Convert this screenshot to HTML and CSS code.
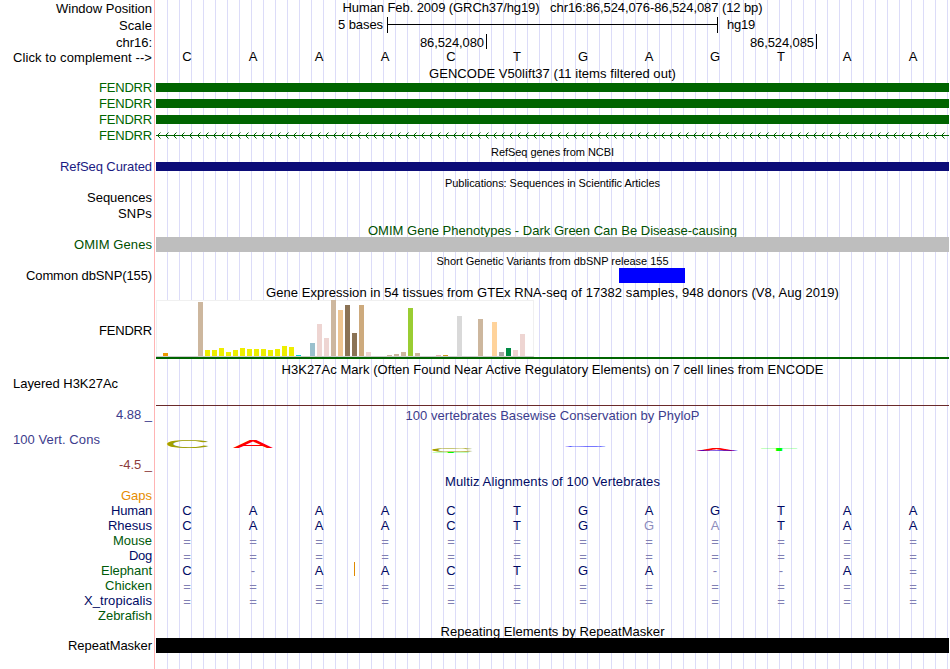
FILE: index.html
```html
<!DOCTYPE html>
<html lang="en">
<head>
<meta charset="utf-8">
<title>Genome Browser - chr16:86,524,076-86,524,087</title>
<link rel="stylesheet" href="styles.css">
</head>
<body>
<main class="browser">
  <div class="row h17 drop1"><div class="label"><span data-w="96">Window Position</span></div><div class="title"><span data-w="420">Human Feb. 2009 (GRCh37/hg19) &nbsp; chr16:86,524,076-86,524,087 (12 bp)</span></div></div>
  <div class="row h17 drop1"><div class="label"><span data-w="33">Scale</span></div>
    <div class="scale"><div class="scale-text"><span data-w="45">5 bases</span></div><div class="ruler"></div><div class="scale-unit"><span data-w="28">hg19</span></div></div></div>
  <div class="row h16 drop1"><div class="label"><span data-w="36">chr16:</span></div>
    <div class="ticks"><div class="tick"><span data-w="64">86,524,080</span></div><div class="tick"><span data-w="64">86,524,085</span></div></div></div>
  <div class="row h15"><div class="label"><span data-w="139">Click to complement --&gt;</span></div><div class="bases lift" data-seq="CAAACTGAGTAA"></div></div>
  <div class="row h15 drop1"><div class="label"></div><div class="title gencode"><span data-w="247">GENCODE V50lift37 (11 items filtered out)</span></div></div>
  <div class="row h16"><div class="label green"><span data-w="53">FENDRR</span></div><div class="exon"></div></div>
  <div class="row h16"><div class="label green"><span data-w="53">FENDRR</span></div><div class="exon"></div></div>
  <div class="row h16"><div class="label green"><span data-w="53">FENDRR</span></div><div class="exon"></div></div>
  <div class="row h16"><div class="label green"><span data-w="53">FENDRR</span></div>
    <svg class="intron" width="793" height="16" shape-rendering="crispEdges"><defs><pattern id="arrow" width="8" height="16" patternUnits="userSpaceOnUse"><path d="M0 7h8v1h-8zM1 7h1v1h-1zM2 6h1v1h-1zM2 8h1v1h-1zM3 5h1v1h-1zM3 9h1v1h-1z"/><path class="soft" d="M4 4h1v1h-1zM4 10h1v1h-1z"/></pattern></defs><rect width="793" height="16" fill="url(#arrow)"/></svg></div>
  <div class="row h15"><div class="label"></div><div class="title small"><span data-w="123">RefSeq genes from NCBI</span></div></div>
  <div class="row h16"><div class="label navy"><span data-w="92">RefSeq Curated</span></div><div class="exon refseq"></div></div>
  <div class="row h15"><div class="label"></div><div class="title small"><span data-w="215">Publications: Sequences in Scientific Articles</span></div></div>
  <div class="row h16"><div class="label"><span data-w="65">Sequences</span></div></div>
  <div class="row h16"><div class="label"><span data-w="34">SNPs</span></div></div>
  <div class="row h15"><div class="label"></div><div class="title omim"><span data-w="369">OMIM Gene Phenotypes - Dark Green Can Be Disease-causing</span></div></div>
  <div class="row h15"><div class="label omim-label"><span data-w="78">OMIM Genes</span></div><div class="block gray"></div></div>
  <div class="row h16"><div class="label"></div><div class="title small snp-title"><span data-w="232">Short Genetic Variants from dbSNP release 155</span></div></div>
  <div class="row h15"><div class="label"><span data-w="126">Common dbSNP(155)</span></div><div class="block snp"></div></div>
  <div class="row h17"><div class="label"></div><div class="title drop2"><span data-w="573">Gene Expression in 54 tissues from GTEx RNA-seq of 17382 samples, 948 donors (V8, Aug 2019)</span></div></div>
  <div class="row h59"><div class="label gtex-label"><span data-w="53">FENDRR</span></div><div class="gtex"><div class="chart" id="chart"></div></div></div>
  <div class="row h17"><div class="label"></div><div class="title drop3"><span data-w="542">H3K27Ac Mark (Often Found Near Active Regulatory Elements) on 7 cell lines from ENCODE</span></div></div>
  <div class="row h30"><div class="label left"><span data-w="105">Layered H3K27Ac</span></div><div class="baseline"></div></div>
  <div class="row h66">
    <div class="label cons"><span data-w="36">4.88 _</span><span class="name" data-w="87">100 Vert. Cons</span><span class="min" data-w="33">-4.5 _</span></div>
    <div class="phylop"><div class="title drop2"><span data-w="294">100 vertebrates Basewise Conservation by PhyloP</span></div>
      <svg class="logo" width="793" height="30">
        <text class="c" transform="translate(8 17.9) scale(6.5 1.08)">C</text>
        <text class="a" transform="translate(77 18) scale(6 1.13)">A</text>
        <text class="c" transform="translate(273 22) scale(6.4 .52)">C</text>
        <text class="t" transform="translate(275 23) scale(6.5 .12)">T</text>
        <text class="g" transform="translate(406 17) scale(6.2 .09)">G</text>
        <text class="a" transform="translate(540 20.5) scale(6.1 .26)">A</text>
        <text class="g" transform="translate(538 21) scale(6.2 .1)">G</text>
        <text class="t" transform="translate(603.5 21) scale(6.4 .4)">T</text>
      </svg></div>
  </div>
  <div class="row h16"><div class="label"></div><div class="title drop2 species"><span data-w="215">Multiz Alignments of 100 Vertebrates</span></div></div>
  <div class="row h15"><div class="label gaps"><span data-w="31">Gaps</span></div></div>
  <div class="row h15"><div class="label species"><span data-w="41">Human</span></div><div class="bases species" data-seq="CAAACTGAGTAA"></div></div>
  <div class="row h15"><div class="label species"><span data-w="44">Rhesus</span></div><div class="bases species" data-seq="CAAACTGgaTAA"></div></div>
  <div class="row h15"><div class="label forest"><span data-w="39">Mouse</span></div><div class="bases species" data-seq="============"></div></div>
  <div class="row h15"><div class="label species"><span data-w="23">Dog</span></div><div class="bases species" data-seq="============"></div></div>
  <div class="row h15"><div class="label forest"><span data-w="51">Elephant</span></div><div class="bases species insertion" data-seq="C-AACTGA--A="></div></div>
  <div class="row h15"><div class="label forest"><span data-w="47">Chicken</span></div><div class="bases species" data-seq="============"></div></div>
  <div class="row h15"><div class="label species"><span data-w="68">X_tropicalis</span></div><div class="bases species" data-seq="============"></div></div>
  <div class="row h15"><div class="label forest"><span data-w="54">Zebrafish</span></div></div>
  <div class="row h15 drop1"><div class="label"></div><div class="title"><span data-w="224">Repeating Elements by RepeatMasker</span></div></div>
  <div class="row h15"><div class="label"><span data-w="84">RepeatMasker</span></div><div class="block black"></div></div>
</main>
<script src="tracks.js"></script>
</body>
</html>
```
FILE: styles.css
```css
* { box-sizing: border-box; }
body { margin: 0; background: #fff; color: #000; font: 13px/15px "Liberation Sans", Arial, sans-serif; }
.browser {
  width: 949px; height: 669px; overflow: hidden;
  background:
    linear-gradient(#ffb4b4, #ffb4b4) 154px 0 / 1px 100% no-repeat,
    repeating-linear-gradient(to right, transparent 0 11px, #dcdcf8 11px 12px) 156px 0 / 793px 100% no-repeat;
}
.row { display: grid; grid-template-columns: 152px 793px; column-gap: 4px; }
.row > * { min-width: 0; }
.h15 { height: 15px; } .h16 { height: 16px; } .h17 { height: 17px; }
.h30 { height: 30px; } .h59 { height: 59px; } .h66 { height: 66px; }
.label { text-align: right; white-space: nowrap; }
.label.left { text-align: left; padding-left: 13px; }
.title { text-align: center; white-space: nowrap; }
.row.drop1 { padding-top: 1px; }
.row.drop1:first-child .title { margin-top: -1px; }
.drop2 { padding-top: 2px; }
.drop3 { padding-top: 3px; }
.small { font-size: 11px; padding-top: 1px; }
.snp-title { padding-top: 2px; }
.green { color: #006400; }
.navy { color: #1a1a82; }
.omim { color: #005000; padding-top: 1px; }
.omim-label { color: #005000; }
.species { color: #000a64; }
.forest { color: #005a0a; }
.gaps { color: #e68c00; }

.scale { display: flex; margin-top: -1px; }
.scale-text { width: 227px; text-align: right; }
.ruler { width: 331px; height: 16px; margin-left: 4px; border: solid #000; border-width: 0 1px; background: linear-gradient(#000, #000) 0 7px / 100% 1px no-repeat; }
.scale-unit { margin-left: 9px; }
.ticks { display: flex; margin-top: -1px; }
.tick { width: 330px; height: 15px; padding: 1px 2px 0 0; text-align: right; border-right: 1px solid #000; }
.tick:first-child { width: 331px; }

.bases { display: grid; grid-template-columns: repeat(12, 66px); margin-left: -2px; text-align: center; }
.lift { margin-top: -1px; }
.faint { color: #8c8cbc; }
.gap { color: #8080b4; }
.equals { padding-top: 1px; }
.insertion { position: relative; }
.insertion::after { content: ""; position: absolute; left: 200px; top: -1px; width: 1px; height: 14px; background: #e08a00; }

.exon { height: 9px; margin-top: 3px; background: #006400; }
.exon.refseq { background: #0c0c78; }
.intron { display: block; fill: #006400; }
.soft { opacity: .5; }
.block { height: 15px; }
.gray { background: #bebebe; }
.black { background: #000; }
.snp { width: 66px; margin-left: 463px; background: #00f; }

.gtex-label { padding-top: 23px; }
.gtex { border-bottom: 2px solid #006400; }
.chart { display: flex; align-items: flex-end; gap: 2px; width: 378px; height: 57px; background: #fff; border-bottom: 1px solid #ccc; box-shadow: inset 0 1px #f0f0f0, inset 1px 0 #f0f0f0, inset -1px 0 #f0f0f0; }
.bar { width: 5px; }

.baseline { border-bottom: 1px solid #6a2a2a; }
.cons { display: flex; flex-direction: column; align-items: flex-end; color: #3c3c8c; padding-top: 1px; }
.cons .name { align-self: flex-start; margin: 10px 0 0 13px; }
.cons .min { margin-top: 10px; color: #8c3c3c; }
.phylop { color: #3c3c8c; }
.logo { display: block; margin-top: 7px; font-size: 10px; }
.logo .c { fill: #a0a000; } .logo .a { fill: #f00; } .logo .g { fill: #00f; } .logo .t { fill: #0f0; }
```
FILE: tracks.js
```js
// One cell per base; lower case marks a mismatch with the reference base.
document.querySelectorAll('[data-seq]').forEach(row => {
  for (const ch of row.dataset.seq) {
    const cell = document.createElement('span');
    cell.textContent = ch.toUpperCase();
    if (/[a-z]/.test(ch)) cell.className = 'faint';
    if (ch === '-') cell.className = 'gap';
    if (ch === '=') cell.className = 'gap equals';
    row.append(cell);
  }
});

// Expression per tissue: slot, bar height, colour.
const tan = '#cdb79e', yellow = '#eeee00', rose = '#eed5d2';
const tissues = [
  [1,3,'#ee9a00'],[6,54,tan],[7,6,yellow],[8,6,yellow],[9,8,yellow],[10,4,yellow],[11,6,yellow],
  [12,8,yellow],[13,7,yellow],[14,7,yellow],[15,7,yellow],[16,6,yellow],[17,7,yellow],[18,10,yellow],
  [19,9,yellow],[20,1,'#00cdcd'],[22,13,'#9ac0cd'],[23,32,rose],[24,18,rose],[25,56,tan],
  [26,46,'#eec591'],[27,51,'#8b7355'],[28,23,'#8b7355'],[29,51,'#cdaa7d'],[30,4,rose],[33,1,tan],
  [34,2,tan],[35,4,tan],[36,48,'#9acd32'],[37,3,tan],[40,1,'#eeb4b4'],[41,1,'#cd9b1d'],
  [43,40,'#d9d9d9'],[46,37,tan],[48,34,'#ffd39b'],[49,4,'#a6a6a6'],[50,8,'#008b45'],[51,6,rose],[52,22,rose]
];
const chart = document.getElementById('chart');
for (let slot = 0; slot < 54; slot++) {
  const t = tissues.find(v => v[0] === slot);
  const bar = document.createElement('div');
  bar.className = 'bar';
  if (t) { bar.style.height = t[1] + 'px'; bar.style.background = t[2]; }
  chart.append(bar);
}

// Track the letters so that each caption fills its allotted width.
document.querySelectorAll('[data-w]').forEach(el => {
  const natural = el.getBoundingClientRect().width;
  el.style.letterSpacing = (el.dataset.w - natural) / el.textContent.length + 'px';
});
```
